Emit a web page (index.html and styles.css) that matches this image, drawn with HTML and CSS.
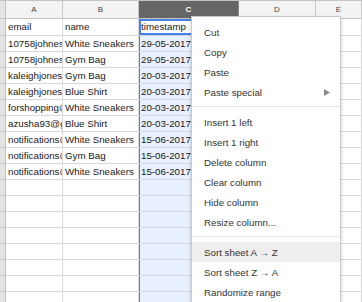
FILE: index.html
```html
<!DOCTYPE html>
<html>
<head>
<meta charset="utf-8">
<link rel="stylesheet" href="styles.css">
</head>
<body>
<div class="sheet">
  <div class="row hdr">
    <div class="cell rh"></div>
    <div class="cell ch">A</div>
    <div class="cell ch">B</div>
    <div class="cell ch sel">C</div>
    <div class="cell ch">D</div>
    <div class="cell ch">E</div>
  </div>
  <div class="row first">
    <div class="cell rh"></div>
    <div class="cell">email</div>
    <div class="cell">name</div>
    <div class="cell c active">timestamp</div>
    <div class="cell"></div>
    <div class="cell"></div>
  </div>
  <div class="row"><div class="cell rh"></div><div class="cell">10758johnes@gmail.com</div><div class="cell">White Sneakers</div><div class="cell c">29-05-2017</div><div class="cell"></div><div class="cell"></div></div>
  <div class="row"><div class="cell rh"></div><div class="cell">10758johnes@gmail.com</div><div class="cell">Gym Bag</div><div class="cell c">29-05-2017</div><div class="cell"></div><div class="cell"></div></div>
  <div class="row"><div class="cell rh"></div><div class="cell">kaleighjones@gmail.com</div><div class="cell">Gym Bag</div><div class="cell c">20-03-2017</div><div class="cell"></div><div class="cell"></div></div>
  <div class="row"><div class="cell rh"></div><div class="cell">kaleighjones@gmail.com</div><div class="cell">Blue Shirt</div><div class="cell c">20-03-2017</div><div class="cell"></div><div class="cell"></div></div>
  <div class="row"><div class="cell rh"></div><div class="cell">forshopping@gmail.com</div><div class="cell">White Sneakers</div><div class="cell c">20-03-2017</div><div class="cell"></div><div class="cell"></div></div>
  <div class="row"><div class="cell rh"></div><div class="cell">azusha93@gmail.com</div><div class="cell">Blue Shirt</div><div class="cell c">20-03-2017</div><div class="cell"></div><div class="cell"></div></div>
  <div class="row"><div class="cell rh"></div><div class="cell">notifications@shop.com</div><div class="cell">White Sneakers</div><div class="cell c">15-06-2017</div><div class="cell"></div><div class="cell"></div></div>
  <div class="row"><div class="cell rh"></div><div class="cell">notifications@shop.com</div><div class="cell">Gym Bag</div><div class="cell c">15-06-2017</div><div class="cell"></div><div class="cell"></div></div>
  <div class="row"><div class="cell rh"></div><div class="cell">notifications@shop.com</div><div class="cell">White Sneakers</div><div class="cell c">15-06-2017</div><div class="cell"></div><div class="cell"></div></div>
  <div class="row"><div class="cell rh"></div><div class="cell"></div><div class="cell"></div><div class="cell c"></div><div class="cell"></div><div class="cell"></div></div>
  <div class="row"><div class="cell rh"></div><div class="cell"></div><div class="cell"></div><div class="cell c"></div><div class="cell"></div><div class="cell"></div></div>
  <div class="row"><div class="cell rh"></div><div class="cell"></div><div class="cell"></div><div class="cell c"></div><div class="cell"></div><div class="cell"></div></div>
  <div class="row"><div class="cell rh"></div><div class="cell"></div><div class="cell"></div><div class="cell c"></div><div class="cell"></div><div class="cell"></div></div>
  <div class="row"><div class="cell rh"></div><div class="cell"></div><div class="cell"></div><div class="cell c"></div><div class="cell"></div><div class="cell"></div></div>
  <div class="row"><div class="cell rh"></div><div class="cell"></div><div class="cell"></div><div class="cell c"></div><div class="cell"></div><div class="cell"></div></div>
  <div class="row"><div class="cell rh"></div><div class="cell"></div><div class="cell"></div><div class="cell c"></div><div class="cell"></div><div class="cell"></div></div>
  <div class="row"><div class="cell rh"></div><div class="cell"></div><div class="cell"></div><div class="cell c"></div><div class="cell"></div><div class="cell"></div></div>
</div>

<div class="menu">
  <div class="item">Cut</div>
  <div class="item">Copy</div>
  <div class="item">Paste</div>
  <div class="item">Paste special
    <svg class="arrow" width="6" height="7" viewBox="0 0 6 7"><polygon points="0,0 6,3.5 0,7" fill="#8a8a8a"/></svg>
  </div>
  <div class="sep"></div>
  <div class="item">Insert 1 left</div>
  <div class="item">Insert 1 right</div>
  <div class="item">Delete column</div>
  <div class="item">Clear column</div>
  <div class="item">Hide column</div>
  <div class="item">Resize column...</div>
  <div class="sep"></div>
  <div class="item hover">Sort sheet A → Z</div>
  <div class="item">Sort sheet Z → A</div>
  <div class="item">Randomize range</div>
</div>
</body>
</html>
```

FILE: styles.css
```css
html, body {
  margin: 0;
  padding: 0;
  background: #fff;
  overflow: hidden;
  width: 362px;
  height: 302px;
}
body {
  position: relative;
  font-family: "Liberation Sans", Arial, sans-serif;
  font-size: 9.75px;
  color: #1a1a1a;
}
.sheet {
  border-top: 1px solid #c4c4c4;
}
.row {
  display: grid;
  grid-template-columns: 6px 57px 76px 100px 77px 1fr;
  height: 16px;
}
.row.hdr {
  height: 18px;
}
.row.first {
  height: 17px;
}
.cell {
  box-sizing: border-box;
  border-right: 1px solid #dadada;
  border-bottom: 1px solid #dadada;
  padding: 0 2px;
  white-space: nowrap;
  overflow: hidden;
  display: flex;
  align-items: center;
  line-height: 1;
}
.cell.rh {
  background: #e4e4e4;
  border-right: 1px solid #c0c0c0;
  border-bottom: 1px solid #c8c8c8;
  padding: 0;
}
.cell.ch {
  background: #f3f3f3;
  border-right: 1px solid #c8c8c8;
  border-bottom: 1px solid #c4c4c4;
  justify-content: center;
  font-size: 8px;
  color: #444;
}
.cell.ch.sel {
  background: #666;
  color: #fff;
  font-weight: bold;
  border-right-color: #888;
}
.cell.c {
  background: #e9f0fd;
  border-bottom-color: #ccd4e2;
  box-shadow: inset 1px 0 0 #4a7fe6;
}
.cell.c.active {
  background: #fff;
  box-shadow: inset 0 0 0 2px #4a7fe6;
}
.menu {
  position: absolute;
  left: 191px;
  top: 16px;
  width: 150px;
  height: 300px;
  box-sizing: border-box;
  background: #fff;
  border: 1px solid #c9c9c9;
  box-shadow: 0 2px 4px rgba(0, 0, 0, 0.2);
  padding-top: 5px;
  color: #333;
}
.item {
  height: 20px;
  padding-left: 12px;
  display: flex;
  align-items: center;
  position: relative;
}
.item.hover {
  background: #eeeeee;
}
.arrow {
  position: absolute;
  left: 132px;
  top: 7px;
}
.sep {
  height: 1px;
  background: #e5e5e5;
  margin: 4px 0 5px;
}
```
